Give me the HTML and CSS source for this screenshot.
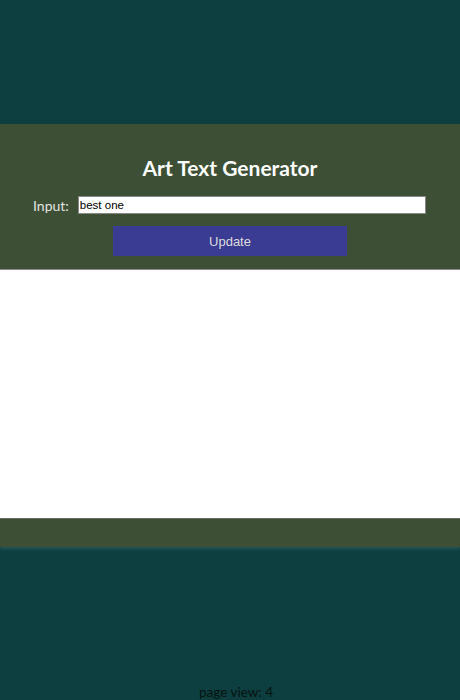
FILE: index.html
```html
<!DOCTYPE html>
<html lang="en">
<head>
    <meta charset="UTF-8">
    <meta name="viewport" content="width=device-width, initial-scale=1.0">
    <title>Art Text Generator</title>
    <link rel="stylesheet" href="styles.css">
</head>
<body>

<div class="top-space"></div>

<div class="panel">
    <h1>Art Text Generator</h1>
    <div class="input-row">
        <label for="text-input">Input:</label>
        <input type="text" id="text-input" value="best one">
    </div>
    <button class="update-btn">Update</button>
</div>

<div class="canvas-box"></div>

<div class="panel-bottom"></div>

<div class="footer">page view: 4</div>

</body>
</html>
```

FILE: styles.css
```css
body {
    margin: 0;
    background-color: #0e3f40;
    font-family: Lato, "Open Sans", sans-serif;
}
.top-space {
    height: 124px;
}
.panel {
    background-color: #3d5035;
    height: 145px;
    box-sizing: border-box;
    padding-top: 32px;
    text-align: center;
}
h1 {
    margin: 0;
    color: #fff;
    font-size: 21px;
    line-height: 24px;
    font-weight: bold;
}
.input-row {
    display: flex;
    align-items: center;
    margin: 16px 34px 0 33px;
}
.input-row label {
    color: #e4e4e4;
    font-size: 14px;
    margin-right: 9px;
}
.input-row input {
    flex: 1;
    height: 18px;
    box-sizing: border-box;
    border: 1px solid #888;
    padding: 0 1px;
    font-family: "Liberation Sans", Arial, sans-serif;
    font-size: 11.5px;
    color: #000;
}
.update-btn {
    display: block;
    margin: 12px auto 0;
    width: 234px;
    height: 30px;
    border: none;
    background-color: #3a3b92;
    color: #ddd;
    font-family: "Liberation Sans", Arial, sans-serif;
    font-size: 13px;
}
.canvas-box {
    background: #fff;
    height: 248px;
    border-top: 1px solid #8a8a8a;
    border-bottom: 1px solid #6a6a6a;
}
.panel-bottom {
    background-color: #3d5035;
    height: 28px;
    box-shadow: 0 2px 3px rgba(60, 110, 120, 0.5);
}
.footer {
    padding-top: 137px;
    padding-left: 12px;
    text-align: center;
    font-size: 13.5px;
    color: #051311;
}
```
